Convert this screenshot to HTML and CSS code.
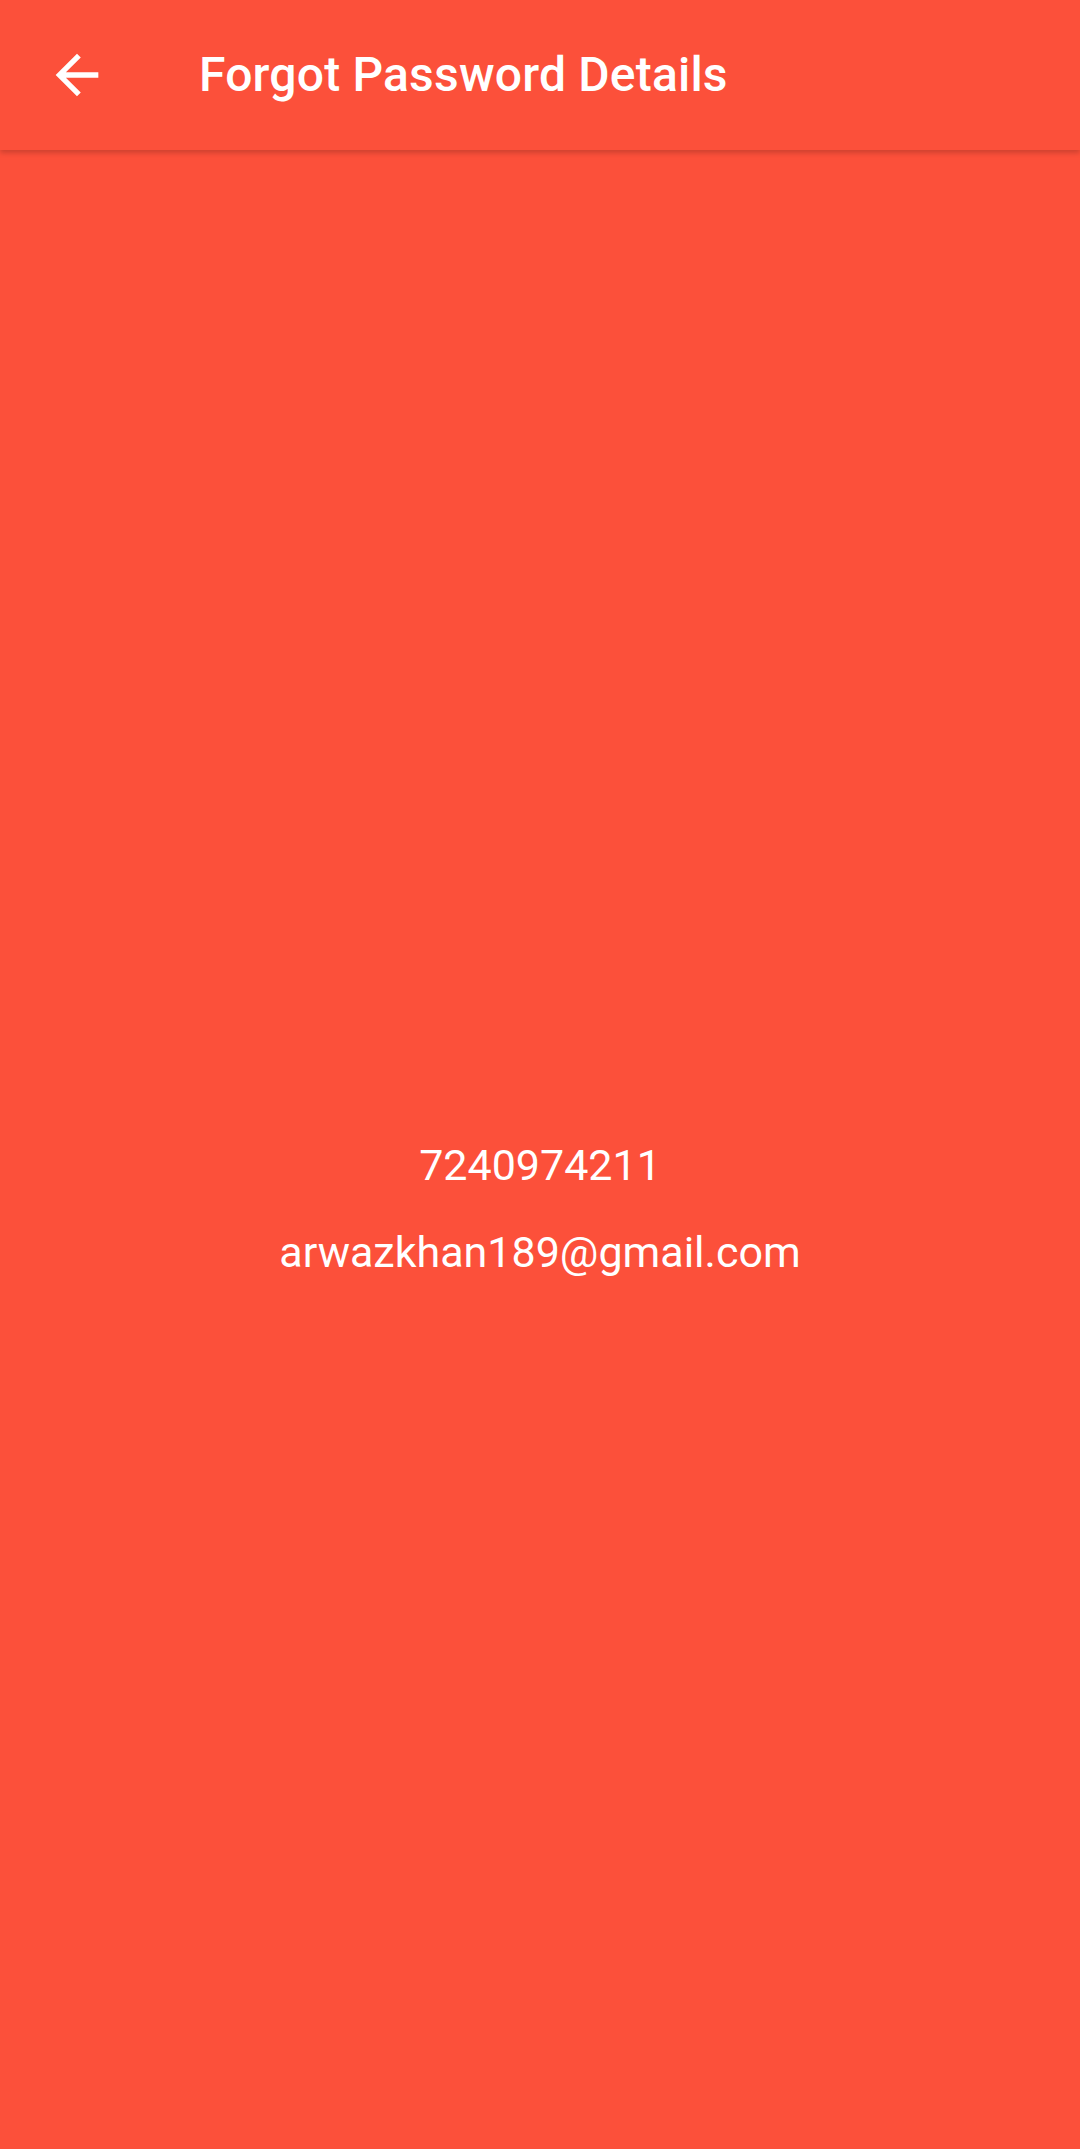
FILE: index.html
```html
<!DOCTYPE html>
<html lang="en">
<head>
<meta charset="utf-8">
<title>Forgot Password Details</title>
<link rel="stylesheet" href="styles.css">
</head>
<body>
<div class="screen">
  <header class="appbar">
    <button class="back" aria-label="Back">
      <svg viewBox="0 0 24 24" width="64" height="64"><path fill="#ffffff" d="M20 11H7.83l5.59-5.59L12 4l-8 8 8 8 1.41-1.41L7.83 13H20v-2z"/></svg>
    </button>
    <h1 class="title">Forgot Password Details</h1>
  </header>
  <main class="content">
    <p class="line">7240974211</p>
    <p class="line">arwazkhan189@gmail.com</p>
  </main>
</div>
</body>
</html>
```
FILE: styles.css
```css
html, body {
  margin: 0;
  padding: 0;
  background: #fc503a;
}
body {
  font-family: Roboto, "Noto Sans", "Liberation Sans", sans-serif;
  color: #ffffff;
}
.screen {
  width: 1080px;
  height: 2149px;
  background: #fc503a;
  display: flex;
  flex-direction: column;
  overflow: hidden;
}
.appbar {
  height: 150px;
  flex: none;
  display: flex;
  align-items: center;
  background: #fc503a;
  box-shadow: 0 3px 5px rgba(0, 0, 0, 0.18);
  position: relative;
  z-index: 1;
}
.back {
  background: none;
  border: 0;
  padding: 0;
  margin: 0 0 0 45px;
  width: 64px;
  height: 64px;
  display: flex;
  align-items: center;
  justify-content: center;
}
.back svg {
  display: block;
}
.title {
  margin: 0 0 0 90px;
  font-size: 48px;
  line-height: 56px;
  font-weight: 500;
  letter-spacing: 0.2px;
  color: #ffffff;
}
.content {
  flex: 1;
  display: flex;
  flex-direction: column;
  align-items: center;
  padding-top: 990px;
  gap: 37px;
}
.line {
  margin: 0;
  font-size: 43px;
  font-weight: 400;
  line-height: 50px;
  color: #ffffff;
}
```
